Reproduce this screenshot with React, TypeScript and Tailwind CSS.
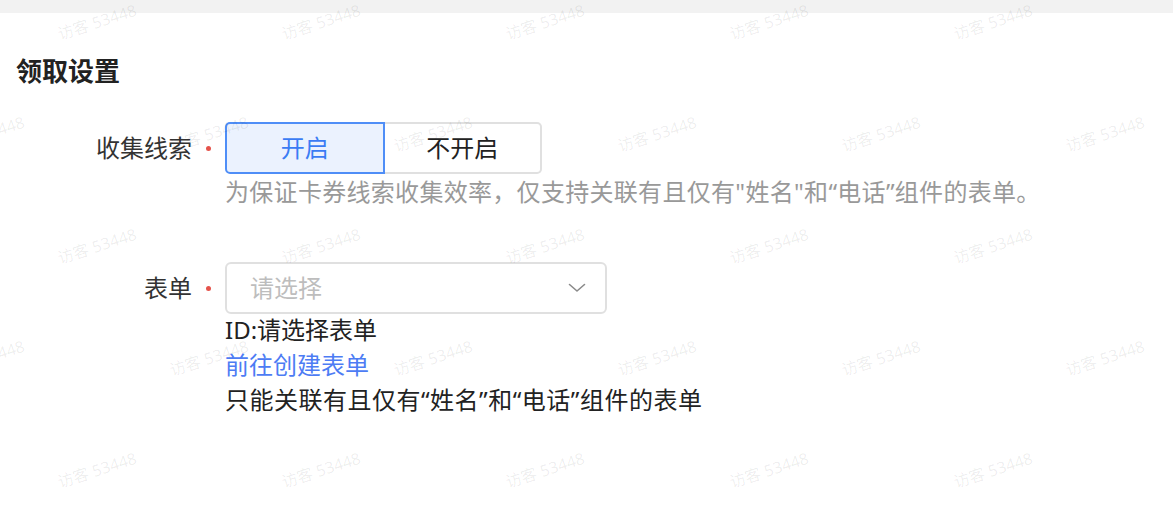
const FONT = "font-['Noto_Sans','Noto_Sans_CJK_SC',sans-serif]";

// watermark grid: two staggered rows, 224px apart
const marks: { x: number; y: number }[] = [];
for (let r = 0; r < 3; r++) {
  for (let c = 0; c < 5; c++) marks.push({ x: 97 + c * 224, y: 22 + r * 224 });
}
for (let r = 0; r < 2; r++) {
  for (let c = 0; c < 6; c++) marks.push({ x: -15 + c * 224, y: 134 + r * 224 });
}

function Watermarks() {
  return (
    <div className="pointer-events-none absolute inset-0 overflow-hidden">
      {marks.map((m, i) => (
        <span
          key={i}
          className="absolute -translate-x-1/2 -translate-y-1/2 -rotate-[18deg] whitespace-nowrap text-[16px] text-black/[0.07]"
          style={{ left: m.x, top: m.y }}
        >
          访客 53448
        </span>
      ))}
    </div>
  );
}

function Label({ text }: { text: string }) {
  return (
    <div className="flex items-center shrink-0">
      <span className="w-[192px] text-right text-[24px] text-[#333]">{text}</span>
      <span className="w-[33px] flex justify-center">
        <span className="w-[5px] h-[5px] rounded-full bg-[#e5534b]"></span>
      </span>
    </div>
  );
}

export default function App() {
  return (
    <div className={`relative w-full h-[507px] bg-white overflow-hidden ${FONT}`}>
      <div className="h-[13px] bg-[#f2f2f2]"></div>

      {/* Section title */}
      <h2 className="mt-[40px] pl-[16px] text-[26px] leading-[36px] font-bold text-[#222]">领取设置</h2>

      {/* 收集线索 */}
      <div className="mt-[33px] flex">
        <div className="h-[52px] flex items-center">
          <Label text="收集线索" />
        </div>
        <div className="flex flex-col">
          <div className="flex h-[52px] w-[317px]">
            <button className="flex-1 flex items-center justify-center rounded-l-[5px] border-2 border-[#4f8ef7] bg-[#ebf2fe] text-[24px] text-[#3b7cf4]">
              开启
            </button>
            <button className="flex-1 flex items-center justify-center rounded-r-[5px] border-2 border-l-0 border-[#e0e0e0] bg-white text-[24px] text-[#222]">
              不开启
            </button>
          </div>
          <p className="text-[24px] leading-[36px] tracking-[0.3px] text-[#999] whitespace-nowrap">
            为保证卡券线索收集效率，仅支持关联有且仅有"姓名"和“电话”组件的表单。
          </p>
        </div>
      </div>

      {/* 表单 */}
      <div className="mt-[52px] flex">
        <div className="h-[52px] flex items-center">
          <Label text="表单" />
        </div>
        <div className="flex flex-col">
          <div className="h-[52px] w-[382px] flex items-center justify-between rounded-[6px] border-2 border-[#e0e0e0] pl-[23px] pr-[19px]">
            <span className="text-[24px] text-[#bdbdbd]">请选择</span>
            <svg width="18" height="10" viewBox="0 0 18 10" fill="none" stroke="#8a8a8a" strokeWidth="1.6" strokeLinecap="round" strokeLinejoin="round">
              <path d="M1.5 1.5 L9 8 L16.5 1.5" />
            </svg>
          </div>
          <div className="-mt-[2px] text-[24px] leading-[35px] text-[#222]">ID:请选择表单</div>
          <a className="text-[24px] leading-[35px] text-[#4d7cf4] cursor-pointer">前往创建表单</a>
          <div className="text-[24px] leading-[35px] tracking-[0.5px] text-[#222] whitespace-nowrap">只能关联有且仅有“姓名”和“电话”组件的表单</div>
        </div>
      </div>

      <Watermarks />
    </div>
  );
}
